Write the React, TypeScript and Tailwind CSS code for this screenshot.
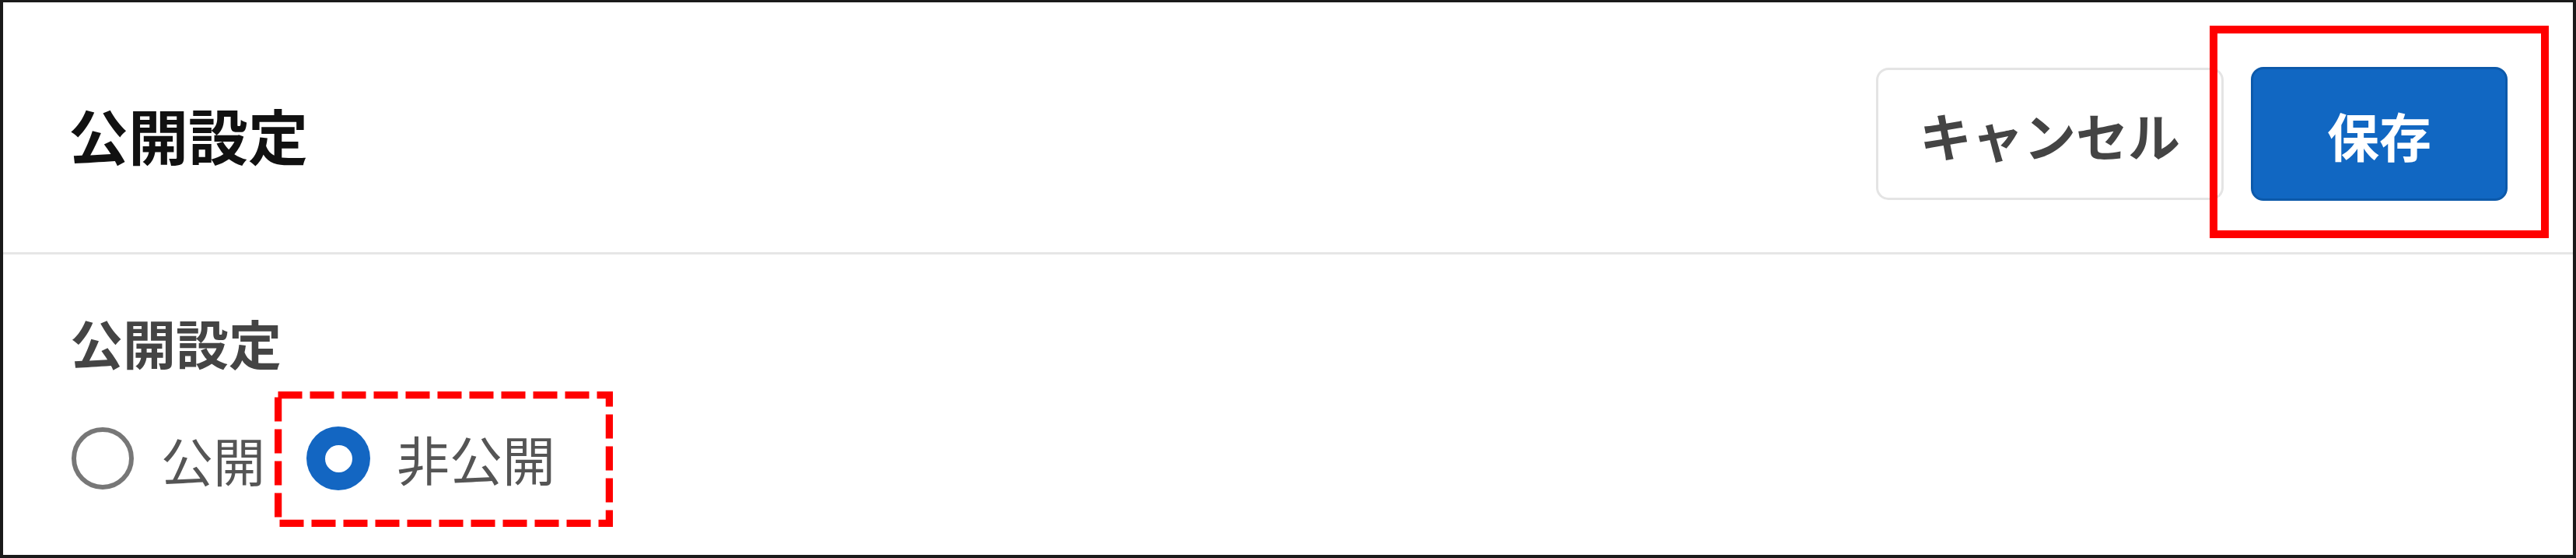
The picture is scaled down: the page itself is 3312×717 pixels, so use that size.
import React from 'react';

const jp = { fontFamily: '"Noto Sans CJK JP", "Noto Sans", sans-serif' };

export default function App() {
  return (
    <div
      style={jp}
      className="relative w-[3312px] h-[717px] bg-white border-[4px] border-t-[3px] border-[#1a1a1a] overflow-hidden"
    >
      {/* Header */}
      <div className="h-[324px] pt-[17px] px-[84px] flex items-center justify-between border-b-[3px] border-[#e6e6e6]">
        <h1 className="text-[77px] font-bold leading-none text-[#111]">公開設定</h1>
        <div className="flex items-center gap-[35px]">
          <button className="w-[447px] h-[170px] rounded-[16px] border-[3px] border-[#e4e4e4] bg-white text-[67px] font-bold leading-none text-[#444]">
            キャンセル
          </button>
          <button className="w-[330px] h-[172px] rounded-[16px] border-[3px] border-[#0c59aa] bg-[#1167c2] text-[67px] font-bold leading-none text-white">
            保存
          </button>
        </div>
      </div>

      {/* Body */}
      <div className="pl-[86px] pt-[79px]">
        <div className="text-[68px] font-bold leading-none text-[#444]">公開設定</div>
        <div className="mt-[74px] pl-[2px] flex items-center">
          <label className="flex items-center gap-[35px]">
            <span className="w-[80px] h-[80px] rounded-full border-[6px] border-[#777]" />
            <span className="text-[67px] leading-none text-[#555]">公開</span>
          </label>
          <label className="ml-[53px] flex items-center gap-[34px]">
            <span className="w-[82px] h-[82px] rounded-full bg-[#1366c2] flex items-center justify-center">
              <span className="w-[35px] h-[35px] rounded-full bg-white" />
            </span>
            <span className="text-[68px] leading-none text-[#555]">非公開</span>
          </label>
        </div>
      </div>

      {/* Annotations */}
      <div className="absolute left-[2837px] top-[30px] w-[436px] h-[273px] border-[10px] border-[#ff0000]" />
      <svg className="absolute left-[349px] top-[500px]" width="435" height="174">
        <rect x="4.5" y="4.5" width="426" height="165" fill="none" stroke="#ff0000" strokeWidth="9.5" strokeDasharray="31 10" />
      </svg>
    </div>
  );
}
